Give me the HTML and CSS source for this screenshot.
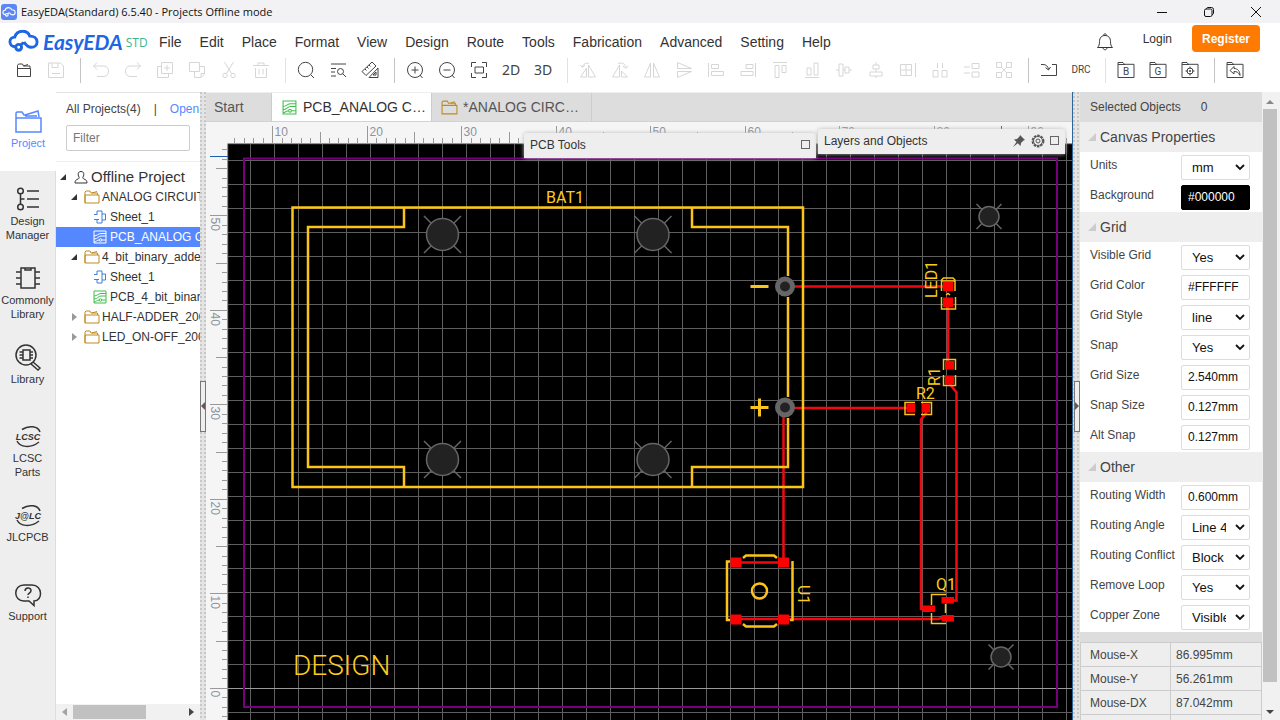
FILE: index.html
```html
<!DOCTYPE html>
<html lang="en">
<head>
<meta charset="utf-8">
<meta name="viewport" content="width=device-width, initial-scale=1">
<title>EasyEDA(Standard) 6.5.40 - Projects Offline mode</title>
<link rel="stylesheet" href="styles.css">
</head>
<body>
<svg class="defs" width="0" height="0" aria-hidden="true">
  <symbol id="i-cloud" viewBox="0 0 32 24"><path d="M9 18H7.500C4.500 18 2 15.800 2 12.800 2 9.800 4.300 8 7 8 8 4.500 11 2 15 2c4 0 6.500 2.200 7.500 5 4.500 0 7.500 2.300 7.500 6 0 3.200-2.500 5.500-6 5.500-3.500 0-5-1.500-7.500-5.500M16 13.500l-3.500 3.200"/><circle cx="11" cy="18.500" r="3"/></symbol>
  <symbol id="i-folder" viewBox="0 0 16 14"><path d="M1 13V2l1-1h4l1 2h6.500v2M1 5h14v8H1zM8 3l5-1.500"/></symbol>
  <symbol id="i-sheet" viewBox="0 0 14 14"><path d="M4 1h5v12H4V9M4 5V1M1 4.500h3M1 9.500h5M9 4h3.500v6H9"/></symbol>
  <symbol id="i-pcb" viewBox="0 0 14 14"><path d="M1 1h12v12H1zM1 6c3 0 4-2.500 7-2.500h5M1 9c4 0 4-3 7-3h5M1 12c2 0 3-2 5-2M9 10h4"/><circle cx="7.500" cy="10" r="1.300"/></symbol>
  <symbol id="i-boxed" viewBox="0 0 18 18"><path d="M1 16V3V1.500h5l1.500 1.800H17V16.500H1zM1 3.500h7"/></symbol>
</svg>

<header class="titlebar">
  <svg class="appicon" viewBox="0 0 16 16"><rect width="16" height="16" rx="3" fill="#5b87f5"/><use href="#i-cloud" x="1" y="2.500" width="14" height="11" fill="none" stroke="#fff" stroke-width="2.500"/></svg>
  <h1 class="title">EasyEDA(Standard) 6.5.40 - Projects Offline mode</h1>
  <div class="winbtns">
    <button aria-label="Minimize"><svg class="w10" viewBox="0 0 10 10"><path d="M0 5.500h10"/></svg></button>
    <button aria-label="Restore"><svg class="w10" viewBox="0 0 10 10"><rect x=".5" y="2" width="7.500" height="7.500" rx="1.500"/><path d="M2.500 2C2.500 1 3 .5 4 .5h3.500a2 2 0 0 1 2 2V6c0 1-.5 1.500-1.500 1.500"/></svg></button>
    <button aria-label="Close"><svg class="w10" viewBox="0 0 10 10"><path d="M0 0l10 10M10 0L0 10"/></svg></button>
  </div>
</header>

<div class="menubar">
  <a class="logo" href="#"><svg class="cloud" viewBox="0 0 32 24"><use href="#i-cloud"/></svg><span class="brand">EasyEDA</span><span class="std">STD</span></a>
  <nav class="menu">
    <button>File</button><button>Edit</button><button>Place</button><button>Format</button><button>View</button><button>Design</button><button>Route</button><button>Tools</button><button>Fabrication</button><button>Advanced</button><button>Setting</button><button>Help</button>
  </nav>
  <div class="account">
    <button class="bell" aria-label="Notifications"><svg viewBox="0 0 18 18"><path d="M1.500 14.500h15c-1.500-1.500-2-3-2-6C14.500 5 12.500 2.500 9 2.500S3.500 5 3.500 8.500c0 3-.5 4.500-2 6zM7.500 2.500C7.500.3 10.500.3 10.500 2.500M7 14.500c0 3 4 3 4 0"/></svg></button>
    <a class="login" href="#">Login</a>
    <button class="register">Register</button>
  </div>
</div>

<div class="toolbar" role="toolbar" aria-label="Tools">
  <button aria-label="Open"><svg viewBox="0 0 18 18"><path d="M2.500 15V4.500L3.500 3h4l1 2H15v2M2.500 7.500h13V15.500h-13zM8.500 5L13 3.500"/></svg></button>
  <button class="off" aria-label="Save"><svg viewBox="0 0 18 18"><path d="M1.500 2h12l3 3v11.500h-15zM5 2v4.500h6V2M5 12.500h8"/></svg></button>
  <i class="sep"></i>
  <button class="off" aria-label="Undo"><svg viewBox="0 0 18 18"><path d="M5 1.500L1.500 5 5 8.500M1.500 5H12c6 0 6 10.500 0 10.500H5"/></svg></button>
  <button class="off" aria-label="Redo"><svg viewBox="0 0 18 18"><path d="M13 1.500L16.500 5 13 8.500M16.500 5H6C0 5 0 15.500 6 15.500h7"/></svg></button>
  <button class="off" aria-label="Duplicate"><svg viewBox="0 0 18 18"><path d="M5.500 1.500h11v11h-11zM11 4v6M8 7h6M5.500 5.500h-4v11h11v-4"/></svg></button>
  <button class="off" aria-label="Copy"><svg viewBox="0 0 18 18"><path d="M1.500 1.500h10v9h-10zM11.500 5.500h5v7.500l-3.500 3.500H6.500v-6M16.500 12.500H13v4"/></svg></button>
  <button class="off" aria-label="Cut"><svg viewBox="0 0 18 18"><path d="M4.500 1l7 11.500M13.500 1l-7 11.500"/><circle cx="5" cy="14.500" r="2.200"/><circle cx="13" cy="14.500" r="2.200"/></svg></button>
  <button class="off" aria-label="Delete"><svg viewBox="0 0 18 18"><path d="M1 4.500h16M6 4.500V2h6v2.500M3.500 7v9.500h11V7M7 8v5.500M11 8v5.500"/></svg></button>
  <i class="sep light"></i>
  <button aria-label="Search"><svg viewBox="0 0 18 18"><circle cx="8.500" cy="8.500" r="7.200"/><path d="M14 14l3 3"/></svg></button>
  <button aria-label="Find similar"><svg viewBox="0 0 18 18"><path d="M2 3h15M2 7.500h5M2 11h4M2 15h5"/><circle cx="11.500" cy="10.500" r="3"/><path d="M14 13l3 3"/></svg></button>
  <button aria-label="Measure"><svg viewBox="0 0 18 18"><path d="M1 10.500L11 1l4 4L5 14.500zM4 8l1.500 1.500M6 6l1.500 1.500M8 4l1.500 1.500M9 15.500L17 7v9.500H8zM12 14l3-3v3z"/></svg></button>
  <i class="sep"></i>
  <button aria-label="Zoom in"><svg viewBox="0 0 18 18"><circle cx="9" cy="9" r="7.500"/><path d="M9 5.500v7M5.500 9h7M14 14l2.500 3"/></svg></button>
  <button aria-label="Zoom out"><svg viewBox="0 0 18 18"><circle cx="9" cy="9" r="7.500"/><path d="M5.500 9h7M14 14l2.500 3"/></svg></button>
  <button aria-label="Fit window"><svg viewBox="0 0 18 18"><path d="M1.500 6V1.500H6M12 1.500h4.500V6M16.500 12v4.500H12M6 16.500H1.500V12M5 6h8.500v6H5z"/></svg></button>
  <button class="dim">2D</button>
  <button class="dim">3D</button>
  <i class="sep light"></i>
  <button class="off" aria-label="Rotate left"><svg viewBox="0 0 18 18"><path d="M9.500 4v12h7zM7.500 7v9h-6zM3.500 6C4 3 7 1.500 10 2.500M1 4l2.500 2.500L6 4"/></svg></button>
  <button class="off" aria-label="Rotate right"><svg viewBox="0 0 18 18"><path d="M8.500 4v12h-7zM10.500 10v6h6zM7 2.500C11 1 14.500 3 15 6.500M12 5l3 2.500L17 5"/></svg></button>
  <button class="off" aria-label="Flip horizontal"><svg viewBox="0 0 18 18"><path d="M7.500 2v14h-6zM10.500 2v14h6z"/></svg></button>
  <button class="off" aria-label="Flip vertical"><svg viewBox="0 0 18 18"><path d="M2.500 1.500v6h14zM2.500 16.500v-6h14z"/></svg></button>
  <button class="off" aria-label="Align left"><svg viewBox="0 0 18 18"><path d="M1.500 2v14M4.500 3.500h7v4h-7zM4.500 10.500h12v4h-12z"/></svg></button>
  <button class="off" aria-label="Align right"><svg viewBox="0 0 18 18"><path d="M16.500 2v14M7 3.500h7v4H7zM2 10.500h12v4H2z"/></svg></button>
  <button class="off" aria-label="Align top"><svg viewBox="0 0 18 18"><path d="M2 1.500h14M4 4.500h4v12H4zM11 4.500h4v7h-4z"/></svg></button>
  <button class="off" aria-label="Align bottom"><svg viewBox="0 0 18 18"><path d="M2 16.500h14M4 7h4v7H4zM11 2h4v12h-4z"/></svg></button>
  <button class="off" aria-label="Align horizontal centre"><svg viewBox="0 0 18 18"><path d="M4 3h4v12H4zM10 6h4v6h-4zM1 9h3M8 9h2M14 9h3"/></svg></button>
  <button class="off" aria-label="Align vertical centre"><svg viewBox="0 0 18 18"><path d="M6 4h6v4H6zM3 11h12v4H3zM9 1v3M9 8v3M9 15v2"/></svg></button>
  <button class="off" aria-label="Align grid"><svg viewBox="0 0 18 18"><path d="M16.500 2v14M1.500 3.500h11v11h-11zM7 3.500v11M1.500 9h11"/></svg></button>
  <button class="off" aria-label="Distribute horizontally"><svg viewBox="0 0 18 18"><path d="M2 9.500h5v6.500H2zM11 9.500h5v6.500h-5zM6.500 2v5M11.500 2v5"/></svg></button>
  <button class="off" aria-label="Distribute vertically"><svg viewBox="0 0 18 18"><path d="M9 2.500h7v5H9zM9 11h7v5H9zM1 6h6M1 12h6"/></svg></button>
  <button class="off" aria-label="Distribute array"><svg viewBox="0 0 18 18"><path d="M1.500 1.500h5v5h-5zM11.500 1.500h5v5h-5zM1.500 11.500h5v5h-5zM11.500 11.500h5v5h-5zM6.500 6.500l5 5M11.500 6.500l-5 5"/></svg></button>
  <i class="sep"></i>
  <button aria-label="Import changes"><svg viewBox="0 0 18 18"><path d="M1 14.500h15.500V3.500H12M1 3.500h2c3 0 5 1.500 5.500 5M5.500 6.500l3 2.500L10.500 6"/></svg></button>
  <button class="drc">DRC</button>
  <i class="sep light"></i>
  <button class="boxed" aria-label="BOM"><svg viewBox="0 0 18 18"><use href="#i-boxed"/><text x="9" y="14">B</text></svg></button>
  <button class="boxed" aria-label="Gerber"><svg viewBox="0 0 18 18"><use href="#i-boxed"/><text x="9" y="14">G</text></svg></button>
  <button class="boxed" aria-label="Pick and place"><svg viewBox="0 0 18 18"><use href="#i-boxed"/><circle cx="9" cy="10" r="3"/><circle cx="9" cy="10" r=".7"/><path d="M9 5.500V8M9 12v2.500M4.500 10H7M11 10h2.500"/></svg></button>
  <i class="sep"></i>
  <button class="boxed" aria-label="Restore version"><svg viewBox="0 0 18 18"><use href="#i-boxed"/><path d="M8 5.500L4 9.500l4 3.500v-2.500c3 0 4.500 1 6 4 0-4-2-7-6-7z"/></svg></button>
</div>

<main class="app">
  <nav class="rail">
    <a class="on" href="#"><svg viewBox="0 0 28 28"><path d="M2 24V5l1-1h5l2 3h1l13-4 1 6M2 10h25v14H2zM11 8h12"/></svg><span>Project</span></a>
    <a href="#"><svg viewBox="0 0 28 28"><circle cx="6.500" cy="5" r="2.800"/><circle cx="6.500" cy="21" r="2.800"/><path d="M6.500 8v10M6.500 13h4M13 5h12M13 13h12M13 21h12"/></svg><span>Design Manager</span></a>
    <a href="#"><svg viewBox="0 0 28 28"><path d="M7 3h14v20H7zM2 7h5M2 13h5M2 19h5M21 7h5M21 13h5M21 19h5M11 3v2h6V3"/></svg><span>Commonly Library</span></a>
    <a href="#"><svg viewBox="0 0 28 28"><circle cx="12" cy="11" r="10"/><path d="M9 6h7v10H9zM5.500 8H9M5.500 11H9M5.500 14H9M16 8h3M16 11h3M16 14h3M19 18l7 6-2 2-7-6"/></svg><span>Library</span></a>
    <a href="#"><svg viewBox="0 0 28 28"><path d="M8 6.500C15 2 24 3 26 9M3 18c3 6 13 8 22 1"/><text x="14" y="17">LCSC</text></svg><span>LCSC Parts</span></a>
    <a href="#"><svg viewBox="0 0 28 28"><path d="M8 6.500C15 2 24 3 26 9M3 18c3 6 13 8 22 1"/><text x="14" y="17">J@LC</text></svg><span>JLCPCB</span></a>
    <a href="#"><svg viewBox="0 0 28 28"><path d="M10 4h8c11 0 11 16 2 16v4.500l-5-4.500h-5C-1 20-1 4 10 4zM11 10c0-4 6-4 6-.5 0 2.500-3 2.500-3 4.500M14 15.500v1.500"/></svg><span>Support</span></a>
  </nav>

  <section class="projects">
    <div class="phead"><span>All Projects(4)</span><span>|</span><a href="#">Open</a></div>
    <div class="pfilter"><input type="text" placeholder="Filter" aria-label="Filter"></div>
    <ul class="tree">
      <li class="root"><i class="tri"></i><svg viewBox="0 0 14 14"><path d="M7 1.500c-3 0-3.500 3-2 5.500.5 1 0 1.500-1 2-2 .8-3 1.500-3 4h12c0-2.500-1-3.200-3-4-1-.5-1.500-1-1-2 1.500-2.500 1-5.500-2-5.500z"/></svg><span>Offline Project</span></li>
      <li class="proj"><i class="tri"></i><svg class="gold"><use href="#i-folder"/></svg><span>ANALOG CIRCUIT</span></li>
      <li class="doc"><svg class="blue"><use href="#i-sheet"/></svg><span>Sheet_1</span></li>
      <li class="doc sel"><svg><use href="#i-pcb"/></svg><span>PCB_ANALOG CIRCUIT</span></li>
      <li class="proj"><i class="tri"></i><svg class="gold"><use href="#i-folder"/></svg><span>4_bit_binary_adder</span></li>
      <li class="doc"><svg class="blue"><use href="#i-sheet"/></svg><span>Sheet_1</span></li>
      <li class="doc"><svg class="green"><use href="#i-pcb"/></svg><span>PCB_4_bit_binary</span></li>
      <li class="proj"><i class="tri shut"></i><svg class="gold"><use href="#i-folder"/></svg><span>HALF-ADDER_2008</span></li>
      <li class="proj"><i class="tri shut"></i><svg class="gold"><use href="#i-folder"/></svg><span>LED_ON-OFF_2008</span></li>
    </ul>
    <div class="hscroll"><i class="arr left"></i><i class="hthumb"></i><i class="arr right"></i></div>
  </section>

  <div class="split"><i class="grip gl"></i></div>

  <section class="work">
    <div class="tabs">
      <button class="tab start">Start</button>
      <button class="tab cur"><svg class="green"><use href="#i-pcb"/></svg><span>PCB_ANALOG CIRCUIT</span></button>
      <button class="tab"><svg class="gold"><use href="#i-folder"/></svg><span>*ANALOG CIRCUIT PROJECT</span></button>
    </div>
    <svg class="board" id="board">
      <g transform="translate(-206 -122)">
        <rect x="228" y="144" width="100%" height="100%" fill="#000"/>
        <g id="rulers" class="rulers"></g>
        <g id="grid" class="grid"></g>
        <path class="cursor" d="M210 156.500h18M1001.500 126v18"/>
        <rect class="outline" x="244" y="158.500" width="813" height="548.500"/>
        <g class="hole">
          <path d="M424 216l37 37M461 216l-37 37M634.500 216l37 37M671.500 216l-37 37M424 441l37 37M461 441l-37 37M634.500 441l37 37M671.500 441l-37 37M976.500 204l25 25M1001.500 204l-25 25M988.500 644.500l25 25M1013.500 644.500l-25 25"/>
          <circle cx="442.500" cy="234.500" r="16"/><circle cx="653" cy="234.500" r="16"/><circle cx="442.500" cy="459.500" r="16"/><circle cx="653" cy="459.500" r="16"/><circle cx="989" cy="216.500" r="10"/><circle cx="1001" cy="657" r="10"/>
        </g>
        <g class="track">
          <path d="M785 286.500H948M785 408H910M736 562.500H783M736 619H938L942 618H948M949 383L956.500 392.500V600.500H948M926 410V413L921 419.500V609H928M783.500 408V562M948 302V365"/>
        </g>
        <g class="silk">
          <path d="M292.500 207.500H803V487H292.500zM404 208V227H308V467H404V487M692 208V227H788V276M788 297V397M788 418V467H692V487"/>
          <path d="M730 561.500H727V620H730M790 620H792.500V561M743 558L746 555.500H774L777 558M743 624L746 626.500H774L777 624"/>
          <circle cx="759.500" cy="591" r="7.500"/>
          <path d="M750.500 286.500h18M750.500 407.500h18M759.500 398.500v18" stroke-width="3"/>
          <path class="thin" d="M941.500 291V280l2-2h9.500l2 2V291M941.500 281H955M941.500 297V309H955.500V297M946 295l2-1.500 2 1.500M943.500 370V359.500H955.500V370M943.500 375V385.500H955.500V375M915 402.500H905V414.500H915M921 402.500H931.500V414.500H921M931.500 605V594.500H946M931.500 613V623.500H946M945.500 604V613"/>
        </g>
        <path class="pads" d="M943 281.500h10v9.500h-10zM943 297.500h10v9.500h-10zM945 361h9v8.500h-9zM945 375.500h9v9h-9zM906.500 404h8.500v8.500h-8.500zM921.500 404h8.500v8.500h-8.500zM730.500 557.500h11v10h-11zM778 557.500h11v10h-11zM730.500 614.500h11v10h-11zM778 614.500h11v10h-11zM922.500 605.500h12.500v6.500h-12.500zM941.500 597h12.500v6.500h-12.500zM941.500 615h12.500v6.500h-12.500z"/>
        <g class="ring"><circle cx="785" cy="286.500" r="7.500"/><circle cx="785" cy="407.500" r="7.500"/></g>
        <g class="lettering">
          <text x="546" y="203">BAT1</text>
          <text x="916" y="399">R2</text>
          <text x="936" y="590">Q1</text>
          <text transform="translate(937 298) rotate(-90)">LED1</text>
          <text transform="translate(940 386) rotate(-90)">R1</text>
          <text transform="translate(798 585) rotate(90)">U1</text>
          <text class="big" x="293" y="675">DESIGN</text>
        </g>
      </g>
    </svg>
    <div class="float tools"><span>PCB Tools</span><button class="sq" aria-label="Expand PCB Tools"></button></div>
    <div class="float layers"><span>Layers and Objects</span>
      <button aria-label="Pin"><svg viewBox="0 0 14 14"><path d="M8 1l5 5-1.500.6-2.500 2.400-.5 3L5.800 9.300 1 13l3.500-4.900L2 5.500 5 5l2.500-2.500z" fill="#555" stroke="none"/></svg></button>
      <button aria-label="Settings"><svg viewBox="0 0 14 14"><circle cx="7" cy="7" r="5.500" stroke-width="1.800" stroke-dasharray="2.500 1"/><circle cx="7" cy="7" r="4.500"/><circle cx="7" cy="7" r="2"/></svg></button>
      <button class="sq" aria-label="Expand Layers and Objects"></button>
    </div>
  </section>

  <div class="split rsplit"><i class="grip gr"></i></div>

  <aside class="props">
    <div class="selected"><span>Selected Objects</span><span>0</span></div>
    <h2>Canvas Properties</h2>
    <div class="row"><label for="units">Units</label><select id="units"><option>mm</option></select></div>
    <div class="row"><label for="bg">Background</label><input id="bg" class="black" value="#000000"></div>
    <h2>Grid</h2>
    <div class="row"><label for="vg">Visible Grid</label><select id="vg"><option>Yes</option></select></div>
    <div class="row"><label for="gc">Grid Color</label><input id="gc" value="#FFFFFF"></div>
    <div class="row"><label for="gs">Grid Style</label><select id="gs"><option>line</option></select></div>
    <div class="row"><label for="sn">Snap</label><select id="sn"><option>Yes</option></select></div>
    <div class="row"><label for="gz">Grid Size</label><input id="gz" value="2.540mm"></div>
    <div class="row"><label for="sz">Snap Size</label><input id="sz" value="0.127mm"></div>
    <div class="row"><label for="as">Alt Snap</label><input id="as" value="0.127mm"></div>
    <h2>Other</h2>
    <div class="row"><label for="rw">Routing Width</label><input id="rw" value="0.600mm"></div>
    <div class="row"><label for="ra">Routing Angle</label><select id="ra"><option>Line 45</option></select></div>
    <div class="row"><label for="rc">Routing Conflict</label><select id="rc"><option>Block</option></select></div>
    <div class="row"><label for="rl">Remove Loop</label><select id="rl"><option>Yes</option></select></div>
    <div class="row"><label for="cz">Copper Zone</label><select id="cz"><option>Visible</option></select></div>
    <table class="mouse">
      <tr><th scope="row">Mouse-X</th><td>86.995mm</td></tr>
      <tr><th scope="row">Mouse-Y</th><td>56.261mm</td></tr>
      <tr><th scope="row">Mouse-DX</th><td>87.042mm</td></tr>
      <tr><th scope="row"></th><td></td></tr>
    </table>
  </aside>
  <div class="vscroll"><i class="arr up"></i><i class="vthumb"></i><i class="arr down"></i></div>
</main>
<script src="board.js"></script>
</body>
</html>
```
FILE: styles.css
```css
* { box-sizing: border-box; }
body {
  margin: 0;
  height: 100vh;
  display: flex;
  flex-direction: column;
  overflow: hidden;
  background: #fff;
  color: #333;
  font: 12px/14px "Liberation Sans", Arial, sans-serif;
}
button, input, select { font: inherit; color: inherit; margin: 0; }
button { background: none; border: 0; padding: 0; white-space: nowrap; }
a { color: inherit; text-decoration: none; }
svg { fill: none; stroke: currentColor; flex: none; }
svg text { stroke: none; fill: currentColor; }
.defs { position: absolute; }

/* window title */
.titlebar { display: flex; align-items: center; flex: none; height: 23px; padding: 0 1px; background: #f2f2f4; color: #111; }
.appicon { width: 16px; height: 16px; stroke: none; }
.title { margin: 0 auto 0 4px; font: 400 11px/16px "Open Sans", "Noto Sans", sans-serif; }
.winbtns { display: flex; }
.winbtns button { width: 47px; height: 23px; display: grid; place-items: center; }
.w10 { width: 10px; height: 10px; overflow: visible; }

/* menu */
.menubar { display: flex; align-items: center; flex: none; height: 33px; padding: 5px 20px 0 8px; }
.logo { display: flex; align-items: center; width: 151px; flex: none; color: #1f66e5; }
.cloud { width: 31px; height: 24px; stroke-width: 3; margin-top: -3px; }
.brand { margin-left: 4px; font: italic 700 21px/24px Lato, sans-serif; }
.std { margin-left: 3px; font: 12px/16px "Open Sans", sans-serif; color: #3db58c; padding-top: 2px; }
.menu { display: flex; gap: 18px; font-size: 14px; line-height: 18px; }
.account { display: flex; align-items: center; margin-left: auto; height: 27px; margin-bottom: 7px; }
.bell { width: 18px; height: 18px; margin: 7px 29px 0 0; }
.bell svg { width: 18px; height: 18px; display: block; }
.login { margin-right: 20px; }
.register { width: 68px; height: 27px; border-radius: 4px; background: #ff7a00; color: #fff; font-weight: 700; }

/* toolbar */
.toolbar { display: flex; flex: none; height: 36px; padding: 0 8px 8px; align-items: center; color: #444; overflow: hidden; }
.toolbar button { width: 32px; height: 28px; display: grid; place-items: center; flex: none; }
.toolbar svg { width: 18px; height: 18px; }
.toolbar .off { color: #d6d6d6; }
.sep { width: 1px; height: 25px; background: #c4c4c4; margin: 0 4px 0 8px; flex: none; }
.sep.light { background: #e2e2e2; }
.toolbar .dim { font: 14px/18px "Noto Sans", sans-serif; }
.toolbar .drc { font: 400 10px/14px Roboto, sans-serif; }
.boxed text { font: 10px Roboto, sans-serif; text-anchor: middle; }

/* columns */
.app { display: flex; flex: 1; min-height: 0; }
.rail { width: 56px; flex: none; background: #eee; border-right: 1px solid #ddd; }
.rail a { display: flex; flex-direction: column; align-items: center; height: 79px; padding: 15px 0 0; font-size: 11px; text-align: center; }
.rail svg { width: 28px; height: 28px; stroke-width: 1.5; }
.rail text { font: italic 700 9px "Liberation Sans", sans-serif; text-anchor: middle; }
.rail .on { background: #fff; color: #5588ff; width: 56px; padding-top: 16px; }

.projects { width: 144px; flex: none; display: flex; flex-direction: column; overflow: hidden; border-top: 1px solid #e4e4e4; }
.phead { display: flex; gap: 13px; padding: 9px 0 9px 10px; white-space: nowrap; color: #444; }
.phead a { color: #5588ff; }
.pfilter { padding: 0 10px 10px; border-bottom: 1px solid #eee; }
.pfilter input { width: 100%; height: 26px; padding: 0 6px; border: 1px solid #ccc; border-radius: 2px; background: #fff; }
.pfilter input::placeholder { color: #777; opacity: 1; }
.tree { list-style: none; margin: 5px 0 0; padding: 0; flex: 1; white-space: nowrap; }
.tree li { display: flex; align-items: center; height: 20px; }
.tree svg { width: 16px; height: 14px; margin-right: 1px; }
.root { padding-left: 4px; gap: 8px; font-size: 15px; }
.root svg { margin: 0; width: 14px; }
.root span { margin-left: -5px; }
.proj { padding-left: 15px; gap: 1px; }
.proj .tri { margin-right: 6px; }
.doc { padding-left: 36px; gap: 1px; }
.sel { background: #5588ff; color: #fff; }
.gold { color: #c08a20; }
.blue { color: #3f7fd8; }
.green { color: #3fbf4c; }
.tri { width: 6px; height: 6px; flex: none; background: #333; clip-path: polygon(100% 0, 100% 100%, 0 100%); }
.tri.shut { width: 5px; height: 8px; margin-left: 1px; background: #999; clip-path: polygon(0 0, 100% 50%, 0 100%); }
.hscroll { display: flex; align-items: center; height: 16px; background: #f1f1f1; padding: 0 6px; }
.hthumb { width: 73px; height: 14px; background: #c1c1c1; margin: 0 auto 0 6px; }
.arr { width: 5px; height: 8px; background: #444; flex: none; }
.left { background: #a3a3a3; clip-path: polygon(100% 0, 100% 100%, 0 50%); }
.right { clip-path: polygon(0 0, 100% 50%, 0 100%); }
.up, .down { width: 8px; height: 4px; }
.up { background: #888; clip-path: polygon(50% 0, 100% 100%, 0 100%); }
.down { clip-path: polygon(0 0, 100% 0, 50% 100%); }

.split { width: 6px; flex: none; display: flex; flex-direction: column; justify-content: center; background: #e4e4e4 radial-gradient(circle at 1px 1px, #c8c8c8 0 1px, transparent 1px) 0 0 / 4px 4px; }
.rsplit { width: 8px; border-left: 1px solid #2d6496; padding-left: 1px; }
.grip { height: 51px; border: 1px solid #777; background: #eee; display: grid; place-items: center end; }
.grip::before { content: ""; width: 4px; height: 8px; background: #655; clip-path: polygon(100% 0, 100% 100%, 0 50%); }
.gr::before { clip-path: polygon(0 0, 100% 50%, 0 100%); }

/* editor */
.work { flex: 1; min-width: 0; display: flex; flex-direction: column; position: relative; }
.tabs { display: flex; height: 30px; flex: none; background: #ddd; border-top: 1px solid #eee; border-bottom: 1px solid #d2d2d2; }
.tab { width: 160px; display: flex; align-items: center; gap: 5px; padding: 0 3px 0 9px; border-right: 1px solid #ccc; font-size: 14px; line-height: 20px; color: #555; }
.tab svg { width: 17px; height: 15px; }
.tab span { overflow: hidden; text-overflow: ellipsis; }
.start { width: 66px; padding-left: 8px; }
.cur { background: #fff; color: #333; }
.board { flex: 1; width: 100%; min-height: 0; background: #f5f5f5; }
.rulers { stroke: #999; }
.rulers text { fill: #8b93a0; font-size: 12px; }
.grid { stroke: #5e5e5e; }
.grid .axis { stroke: #999; }
.cursor { stroke: #1b5fb5; }
.outline { stroke: #780080; stroke-width: 2; }
.hole { stroke: #666; stroke-width: 1.5; fill: #222; }
.track { stroke: #f00a10; stroke-width: 2.5; }
.silk { stroke: #fcc419; stroke-width: 2.5; }
.silk .thin { stroke-width: 1.5; }
.pads { fill: #f00; stroke: none; }
.ring { fill: #222; stroke: #666; stroke-width: 5; }
.lettering text { fill: #fccb19; font: 400 16px Roboto, sans-serif; }
.lettering .big { font-size: 28px; font-weight: 300; }
.float { position: absolute; display: flex; align-items: center; height: 25px; padding: 0 6px 2px; background: #eee; border-radius: 3px 3px 0 0; box-shadow: 0 0 4px #bbb; }
.float span { margin-right: auto; }
.float svg { width: 14px; height: 14px; display: block; color: #555; }
.tools { left: 318px; top: 41px; width: 292px; }
.layers { right: 7px; top: 37px; width: 247px; gap: 5px; }
.sq { width: 9px; height: 9px; border: 1px solid #666; }

/* properties */
.props { width: 182px; flex: none; overflow: hidden; background: #ddd; color: #444; }
.selected { height: 30px; padding: 0 10px; display: flex; align-items: center; gap: 20px; }
.props h2 { margin: 0; height: 30px; padding-left: 8px; display: flex; align-items: center; gap: 4px; background: #eee; font-size: 14px; font-weight: 400; }
.props h2::before { content: ""; width: 8px; height: 8px; background: #ccc; clip-path: polygon(100% 0, 100% 100%, 0 100%); }
.row { display: flex; justify-content: space-between; height: 30px; padding: 3px 12px 2px 10px; background: #fff; white-space: nowrap; }
.row label { padding-top: 3px; }
.row input, .row select { width: 69px; height: 25px; flex: none; border: 1px solid #ddd; border-radius: 2px; background: #fff; color: #111; padding: 0 6px 2px; outline: 0; }
.row select { appearance: none; font-size: 13px; padding: 0 23px 0 10px; background: #fff url("data:image/svg+xml,%3Csvg xmlns='http://www.w3.org/2000/svg' width='10' height='7'%3E%3Cpath d='M1 1l4 4 4-4' fill='none' stroke='%23111' stroke-width='1.800'/%3E%3C/svg%3E") no-repeat right 4px center; }
.row .black { background: #000; color: #fff; border-color: #000; }
.mouse { width: 100%; margin-top: 10px; border-collapse: collapse; background: #eee; }
.mouse th, .mouse td { height: 24px; padding: 0 5px; border: 1px solid #ccc; font-weight: 400; text-align: left; }
.mouse th { width: 90px; padding-left: 9px; }
.vscroll { width: 18px; flex: none; display: flex; flex-direction: column; align-items: center; background: #f1f1f1; padding: 8px 2px 6px 0; }
.vthumb { width: 14px; flex: 1; margin: 5px 0 28px; background: #c1c1c1; }
```
FILE: board.js
```js
const NS = "http://www.w3.org/2000/svg";
const board = document.getElementById("board");
const rulers = document.getElementById("rulers");
const grid = document.getElementById("grid");

function line(parent, x1, y1, x2, y2, cls) {
  const el = document.createElementNS(NS, "path");
  el.setAttribute("d", `M${x1} ${y1}L${x2} ${y2}`);
  if (cls) el.setAttribute("class", cls);
  parent.append(el);
}
function label(text, transform) {
  const el = document.createElementNS(NS, "text");
  el.textContent = text;
  el.setAttribute("transform", transform);
  rulers.append(el);
}
// One grid square is 2.54 mm, drawn 24 px wide.
const mm = 24 / 2.54;
const size = n => (n % 10 === 0 ? 18 : n % 5 === 0 ? 12 : 6);

function draw() {
  rulers.replaceChildren();
  grid.replaceChildren();
  const box = board.getBoundingClientRect();
  const right = 206 + box.width;
  const bottom = 122 + box.height;

  for (let x = 250.5; x < right; x += 24) line(grid, x, 144, x, bottom);
  for (let y = 160.5; y < bottom; y += 24) line(grid, 228, y, right, y, y === 688.5 ? "axis" : "");

  for (let n = 6; ; n++) {
    const x = Math.floor(178.3 + n * mm) + 0.5;
    if (x > right) break;
    line(rulers, x, 144 - size(n), x, 144);
    if (n % 10 === 0) label(n, `translate(${x + 2} 136)`);
  }
  for (let n = 57; ; n--) {
    const y = Math.floor(688.3 - n * mm) + 0.5;
    if (y > bottom) break;
    line(rulers, 228 - size(n), y, 228, y);
    if (n % 10 === 0) label(n, `translate(211 ${y + 2}) rotate(90)`);
  }
}
draw();
window.addEventListener("resize", draw);
```
